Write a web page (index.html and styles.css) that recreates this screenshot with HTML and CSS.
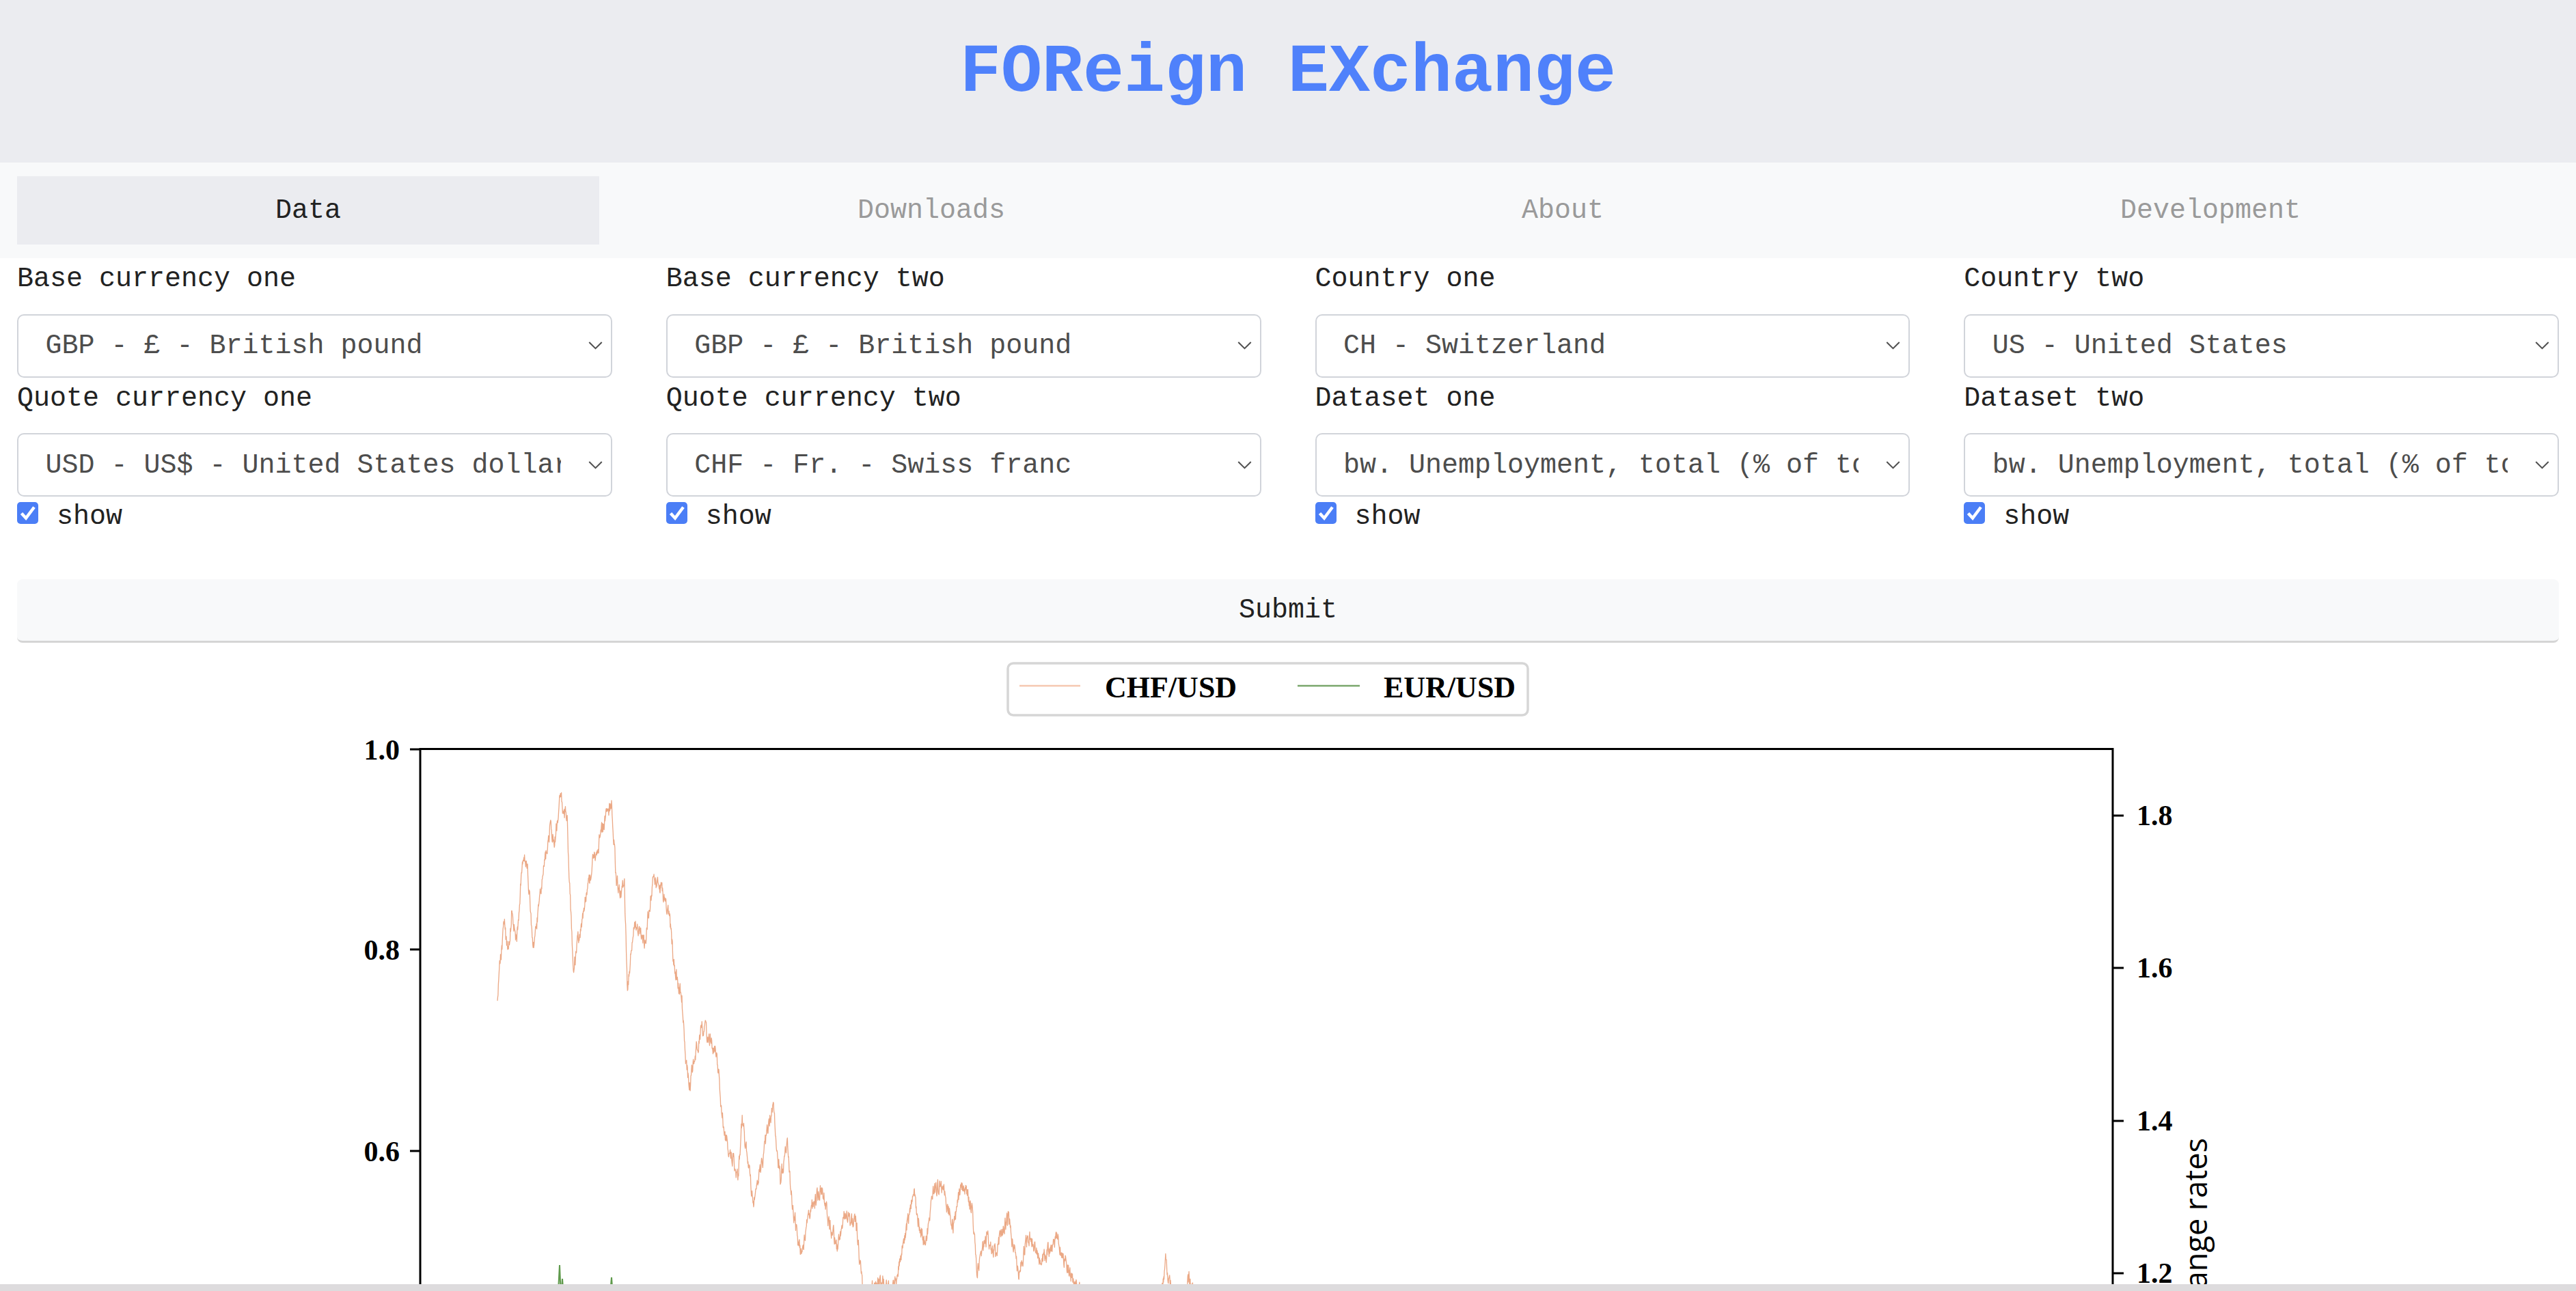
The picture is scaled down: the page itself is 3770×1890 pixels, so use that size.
FILE: index.html
```html
<!DOCTYPE html>
<html lang="en">
<head>
<meta charset="utf-8">
<title>FOReign EXchange</title>
<link rel="stylesheet" href="styles.css">
</head>
<body>
<header class="top">
  <h1 class="title">FOReign EXchange</h1>
</header>
<nav class="tabs">
  <a class="tab active">Data</a>
  <a class="tab">Downloads</a>
  <a class="tab">About</a>
  <a class="tab">Development</a>
</nav>
<main class="content">
  <div class="controls">
    <div class="col">
      <label class="lbl">Base currency one</label>
      <select class="sel"><option>GBP - £ - British pound</option></select>
      <label class="lbl">Quote currency one</label>
      <select class="sel"><option>USD - US$ - United States dollar</option></select>
      <label class="check"><span class="box"><svg viewBox="0 0 31 32" width="31" height="32"><path d="M6.5 16.5 L13 23.5 L25 7.5" fill="none" stroke="#fff" stroke-width="4.5"/></svg></span>show</label>
    </div>
    <div class="col">
      <label class="lbl">Base currency two</label>
      <select class="sel"><option>GBP - £ - British pound</option></select>
      <label class="lbl">Quote currency two</label>
      <select class="sel"><option>CHF - Fr. - Swiss franc</option></select>
      <label class="check"><span class="box"><svg viewBox="0 0 31 32" width="31" height="32"><path d="M6.5 16.5 L13 23.5 L25 7.5" fill="none" stroke="#fff" stroke-width="4.5"/></svg></span>show</label>
    </div>
    <div class="col">
      <label class="lbl">Country one</label>
      <select class="sel"><option>CH - Switzerland</option></select>
      <label class="lbl">Dataset one</label>
      <select class="sel"><option>bw. Unemployment, total (% of total labor force)</option></select>
      <label class="check"><span class="box"><svg viewBox="0 0 31 32" width="31" height="32"><path d="M6.5 16.5 L13 23.5 L25 7.5" fill="none" stroke="#fff" stroke-width="4.5"/></svg></span>show</label>
    </div>
    <div class="col">
      <label class="lbl">Country two</label>
      <select class="sel"><option>US - United States</option></select>
      <label class="lbl">Dataset two</label>
      <select class="sel"><option>bw. Unemployment, total (% of total labor force)</option></select>
      <label class="check"><span class="box"><svg viewBox="0 0 31 32" width="31" height="32"><path d="M6.5 16.5 L13 23.5 L25 7.5" fill="none" stroke="#fff" stroke-width="4.5"/></svg></span>show</label>
    </div>
  </div>
  <button class="submit">Submit</button>
  <svg class="figure" viewBox="25 941 3720 949" width="3720" height="949">
    <rect class="legend-box" x="1475" y="971" width="761" height="76" rx="8"/>
    <line class="leg-chf" x1="1492" y1="1004" x2="1581" y2="1004"/>
    <text class="leg-text" x="1617" y="1021">CHF/USD</text>
    <line class="leg-eur" x1="1899" y1="1004" x2="1990" y2="1004"/>
    <text class="leg-text" x="2025" y="1021">EUR/USD</text>

    <path id="chf" class="line-chf" d=""/>
    <path class="line-eur" d="M760,1990 L812,1925 L817,1890 L819,1852 L821,1900 L823,1872 L826,1915 L860,1935 L892,1905 L895,1870 L898,1915 L950,1990"/>

    <path class="frame" d="M615,1990 L615,1096.5 L3092,1096.5 L3092,1990"/>
    <path class="frame" d="M600,1097 H615 M600,1390 H615 M600,1685 H615"/>
    <path class="frame" d="M3092,1194 H3108 M3092,1417 H3108 M3092,1641 H3108 M3092,1864 H3108"/>
    <text class="tick tick-l" x="585" y="1112">1.0</text>
    <text class="tick tick-l" x="585" y="1405">0.8</text>
    <text class="tick tick-l" x="585" y="1700">0.6</text>
    <text class="tick" x="3127" y="1208">1.8</text>
    <text class="tick" x="3127" y="1431">1.6</text>
    <text class="tick" x="3127" y="1655">1.4</text>
    <text class="tick" x="3127" y="1878">1.2</text>
    <text class="ylabel" x="3230" y="1666" transform="rotate(-90 3230 1666)">Exchange rates</text>
  </svg>
</main>
<div class="hbar"></div>
<script src="script.js"></script>
</body>
</html>
```

FILE: styles.css
```css
html, body {
  margin: 0;
  padding: 0;
  overflow: hidden;
  background: #ffffff;
}
body {
  font-family: "Liberation Mono", "Courier New", monospace;
  font-size: 40px;
  color: #222222;
}
.top {
  background: #ebecf0;
  padding: 47px 0 71px;
}
.title {
  margin: 0;
  text-align: center;
  font-family: "Liberation Mono", "Courier New", monospace;
  font-weight: bold;
  font-size: 100px;
  line-height: 120px;
  color: #4f81fb;
}
.tabs {
  display: flex;
  background: #f8f9fa;
  padding: 20px 25px;
}
.tab {
  flex: 1 1 auto;
  text-align: center;
  line-height: 60px;
  padding: 21px 16px 19px;
  color: #9a9a9a;
  font-size: 40px;
}
.tab.active {
  background: #ebecf0;
  color: #222222;
}
.content {
  padding: 0 25px;
}
.controls {
  display: grid;
  grid-template-columns: repeat(4, 1fr);
  column-gap: 79px;
}
.col {
  display: flex;
  flex-direction: column;
  min-width: 0;
}
.lbl {
  display: block;
  line-height: 60px;
  padding-top: 1px;
  margin-bottom: 20.5px;
  color: #222222;
}
.sel {
  appearance: none;
  -webkit-appearance: none;
  box-sizing: border-box;
  width: 100%;
  height: 93px;
  margin: 0;
  border: 2.5px solid #d1d4da;
  border-radius: 10px;
  background-color: #ffffff;
  background-image: url("data:image/svg+xml,%3Csvg xmlns='http://www.w3.org/2000/svg' viewBox='0 0 22 13'%3E%3Cpath d='M1 1l10 10 10-10' fill='none' stroke='%23505050' stroke-width='2.2'/%3E%3C/svg%3E");
  background-repeat: no-repeat;
  background-size: 21px 12px;
  background-position: right 12px center;
  padding: 2px 73px 0 39.5px;
  font-family: "Liberation Mono", "Courier New", monospace;
  font-size: 40px;
  line-height: 60px;
  color: #4d4d4d;
}
.check {
  display: block;
  line-height: 60px;
  color: #222222;
}
.box {
  display: inline-block;
  width: 31px;
  height: 32px;
  background: #4b7ef6;
  border-radius: 5px;
  margin-right: 27px;
}
.box svg {
  display: block;
}
.submit {
  display: block;
  box-sizing: border-box;
  width: 100%;
  height: 93px;
  margin-top: 61px;
  background: #f8f9fa;
  border: none;
  border-bottom: 3px solid #d5d5d5;
  border-radius: 8px;
  font-family: "Liberation Mono", "Courier New", monospace;
  font-size: 40px;
  line-height: 60px;
  color: #222222;
  padding: 2px 0 0;
}
.figure {
  display: block;
  overflow: hidden;
}
.legend-box {
  fill: #ffffff;
  stroke: #d6d6d6;
  stroke-width: 3.5;
}
.leg-chf {
  stroke: #f6c7b0;
  stroke-width: 2.5;
}
.leg-eur {
  stroke: #79a66b;
  stroke-width: 2.5;
}
.leg-text {
  font-family: "Liberation Serif", "Times New Roman", serif;
  font-weight: bold;
  font-size: 44px;
  fill: #000000;
}
.line-chf {
  fill: none;
  stroke: #e99f78;
  stroke-width: 1.3;
  stroke-linejoin: round;
  stroke-opacity: 0.9;
}
.line-eur {
  fill: none;
  stroke: #5f9a4c;
  stroke-width: 2;
}
.frame {
  fill: none;
  stroke: #000000;
  stroke-width: 3;
}
.tick {
  font-family: "Liberation Serif", "Times New Roman", serif;
  font-weight: bold;
  font-size: 42px;
  fill: #000000;
}
.tick-l {
  text-anchor: end;
}
.ylabel {
  font-family: "Open Sans", "DejaVu Sans", sans-serif;
  font-size: 45px;
  text-anchor: end;
  fill: #000000;
}
.hbar {
  position: fixed;
  left: 0;
  right: 0;
  bottom: 0;
  height: 10px;
  background: #dddbdd;
}
```

FILE: script.js
```js
(function () {
  var ctrl = [[728,1475],[731,1420],[738,1354],[744,1400],[749,1333],[756,1380],[764,1271],[771,1253],[776,1330],[780,1392],[785,1360],[791,1302],[798,1260],[805,1212],[812,1230],[820,1163],[825,1190],[830,1199],[834,1300],[839,1418],[845,1380],[852,1343],[860,1300],[868,1261],[877,1230],[887,1199],[895,1178],[899,1240],[902,1287],[908,1300],[914,1302],[918,1447],[923,1400],[929,1354],[936,1360],[944,1380],[950,1330],[957,1287],[962,1300],[967,1297],[973,1320],[979,1338],[986,1405],[992,1440],[998,1462],[1003,1545],[1009,1591],[1018,1540],[1027,1503],[1038,1520],[1048,1535],[1055,1612],[1061,1660],[1067,1689],[1074,1700],[1080,1723],[1086,1638],[1094,1700],[1103,1767],[1112,1720],[1120,1674],[1131,1615],[1137,1680],[1142,1731],[1147,1700],[1152,1669],[1157,1740],[1162,1777],[1167,1810],[1172,1839],[1180,1800],[1189,1767],[1197,1750],[1204,1739],[1212,1790],[1218,1800],[1226,1832],[1235,1772],[1245,1785],[1254,1798],[1262,1885],[1270,1900],[1280,1880],[1289,1870],[1300,1890],[1311,1875],[1323,1813],[1330,1780],[1337,1746],[1345,1790],[1354,1826],[1360,1780],[1365,1751],[1372,1740],[1377,1726],[1385,1760],[1396,1795],[1402,1760],[1407,1733],[1415,1750],[1423,1772],[1430,1860],[1438,1830],[1445,1811],[1451,1830],[1457,1834],[1466,1800],[1476,1785],[1484,1830],[1491,1870],[1499,1830],[1507,1806],[1515,1830],[1522,1850],[1535,1830],[1549,1813],[1557,1840],[1564,1860],[1579,1885],[1600,1930],[1650,1960],[1698,1910],[1706,1842],[1712,1880],[1725,1920],[1740,1873],[1750,1910],[1800,1960],[2000,1990]];
  var seed = 987654;
  function rnd() {
    seed |= 0; seed = seed + 0x6D2B79F5 | 0;
    var t = Math.imul(seed ^ seed >>> 15, 1 | seed);
    t = t + Math.imul(t ^ t >>> 7, 61 | t) ^ t;
    return ((t ^ t >>> 14) >>> 0) / 4294967296;
  }
  var d = '', j = 0, k = 0;
  var end = ctrl[ctrl.length - 1][0];
  for (var x = ctrl[0][0]; x <= end; x += 0.45) {
    while (k < ctrl.length - 2 && x > ctrl[k + 1][0]) k++;
    var a = ctrl[k], b = ctrl[k + 1];
    var t = (x - a[0]) / (b[0] - a[0]);
    var y = a[1] + (b[1] - a[1]) * t;
    j = j * 0.55 + (rnd() - 0.5) * 20;
    d += (d ? 'L' : 'M') + x.toFixed(2) + ',' + (y + j).toFixed(1);
  }
  document.getElementById('chf').setAttribute('d', d);
})();
```
